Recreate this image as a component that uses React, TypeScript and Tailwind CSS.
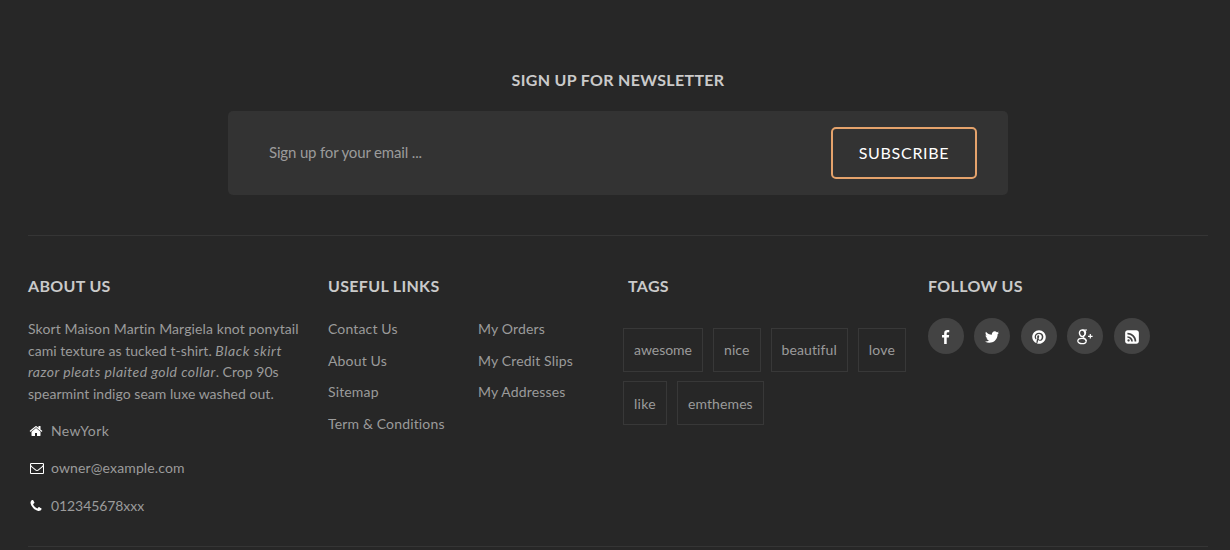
import type { ReactNode } from "react";
import { FaPinterest } from "react-icons/fa";

const paths = {
  home: "M1472 992v480q0 26-19 45t-45 19h-384v-384h-256v384h-384q-26 0-45-19t-19-45v-480q0-1 .5-3t.5-3l575-474 575 474q1 2 1 6zm223-69l-62 74q-8 9-21 11h-3q-13 0-21-7l-692-577-692 577q-12 8-24 7-13-2-21-11l-62-74q-8-10-7-23.5t11-21.5l719-599q32-26 76-26t76 26l244 204v-195q0-14 9-23t23-9h192q14 0 23 9t9 23v408l219 182q10 8 11 21.5t-7 23.5z",
  mail: "M1664 1504v-768q-32 36-69 66-268 206-426 338-51 43-83 67t-86.5 48.5-102.5 24.5h-2q-48 0-102.5-24.5t-86.5-48.5-83-67q-158-132-426-338-37-30-69-66v768q0 13 9.5 22.5t22.5 9.5h1472q13 0 22.5-9.5t9.5-22.5zm0-1051v-24.5l-.5-13-3-12.5-5.5-9-9-7.5-14-2.5h-1472q-13 0-22.5 9.5t-9.5 22.5q0 168 147 284 193 152 401 317 6 5 35 29.5t46 37.5 44.5 31.5 50.5 27.5 43 9h2q20 0 43-9t50.5-27.5 44.5-31.5 46-37.5 35-29.5q208-165 401-317 54-43 100.5-115.5t46.5-131.5zm128-37v1088q0 66-47 113t-113 47h-1472q-66 0-113-47t-47-113v-1088q0-66 47-113t113-47h1472q66 0 113 47t47 113z",
  phone: "M1600 1240q0 27-10 70.5t-21 68.5q-21 50-122 106-94 51-186 51-27 0-53-3.5t-57.5-12.5-47-14.5-55.5-20.5-49-18q-98-35-175-83-127-79-264-216t-216-264q-48-77-83-175-3-9-18-49t-20.5-55.5-14.5-47-12.5-57.5-3.5-53q0-92 51-186 56-101 106-122 25-11 68.5-21t70.5-10q14 0 21 3 18 6 53 76 11 19 30 54t35 63.5 31 53.5q3 4 17.5 25t21.5 35.5 7 28.5q0 20-28.5 50t-62 55-62 53-28.5 46q0 9 5 22.5t8.5 20.5 14 24 11.5 19q76 137 174 235t235 174q2 1 19 11.5t24 14 20.5 8.5 22.5 5q18 0 46-28.5t53-62 55-62 50-28.5q14 0 28.5 7t35.5 21.5 25 17.5q25 15 53.5 31t63.5 35 54 30q70 35 76 53 3 7 3 21z",
  facebook: "M1343 12v264h-157q-86 0-116 36t-30 108v189h293l-39 296h-254v759h-306v-759h-255v-296h255v-218q0-186 104-288.5t277-102.5q147 0 228 12z",
  twitter: "M1684 408q-67 98-162 167 1 14 1 42 0 130-38 259.5t-115.5 248.5-184.5 210.5-258 146-323 54.5q-271 0-496-145 35 4 78 4 225 0 401-138-105-2-188-64.5t-114-159.5q33 5 61 5 43 0 85-11-112-23-185.5-111.5t-73.5-205.5v-4q68 38 146 41-66-44-105-115t-39-154q0-88 44-163 121 149 294.5 238.5t371.5 99.5q-8-38-8-74 0-134 94.5-228.5t228.5-94.5q140 0 236 102 109-21 205-78-37 115-142 178 93-10 186-50z",
  rss: "M640 1280q0-53-37.5-90.5t-90.5-37.5-90.5 37.5-37.5 90.5 37.5 90.5 90.5 37.5 90.5-37.5 37.5-90.5zm351 94q-13-232-177-396t-396-177q-14-1-24 9t-10 23v128q0 13 8.5 22t21.5 10q154 11 264 121t121 264q1 13 10 21.5t22 8.5h128q13 0 23-10t9-24zm384 1q-5-154-56-297.5t-139.5-260-205-205-260-139.5-297.5-56q-14-1-23 9-10 10-10 23v128q0 13 9 22t22 10q204 7 378 111.5t278.5 278.5 111.5 378q1 13 10 22t22 9h128q13 0 23-10 11-9 9-23zm289-959v960q0 119-84.5 203.5t-203.5 84.5h-960q-119 0-203.5-84.5t-84.5-203.5v-960q0-119 84.5-203.5t203.5-84.5h960q119 0 203.5 84.5t84.5 203.5z",
};

function Glyph({ d, className }: { d: string; className: string }) {
  return (
    <svg viewBox="0 0 1792 1792" fill="currentColor" className={className} aria-hidden="true">
      <path d={d} />
    </svg>
  );
}

function GooglePlus() {
  return (
    <svg viewBox="0 0 16 16" fill="none" stroke="currentColor" className="mt-px size-4" aria-hidden="true">
      <ellipse cx="5.2" cy="4.3" rx="2.7" ry="3.2" strokeWidth="1.4" transform="rotate(-14 5.2 4.3)" />
      <path d="M5.500 1h4.500M7.500 1.500c1.100.9 1.300 2.300.7 3.500C7.400 6.600 5.900 7.200 6.200 8.200c.4 1.200 3 1.600 3 3.700" strokeWidth="1.200" />
      <ellipse cx="5" cy="12" rx="4.200" ry="2.700" strokeWidth="1.300" />
      <path d="M13.300 5v4.600M11 7.300h4.600" strokeWidth="1.200" />
    </svg>
  );
}

function Heading({ children }: { children: ReactNode }) {
  return (
    <h2 className="text-base leading-6 font-bold tracking-[0.32px] whitespace-nowrap text-[#cacaca]">{children}</h2>
  );
}

const contacts = [
  { d: paths.home, text: "NewYork", tracking: "tracking-[0.4px]", icon: "ml-px mr-px size-[14px] text-white" },
  { d: paths.mail, text: "owner@example.com", tracking: "tracking-[0.13px]", icon: "ml-0.5 size-[14px] text-white" },
  { d: paths.phone, text: "012345678xxx", tracking: "tracking-[-0.08px]", icon: "ml-px mr-px size-[14px] text-white" },
];
const links = [
  ["Contact Us", "About Us", "Sitemap", "Term & Conditions"],
  ["My Orders", "My Credit Slips", "My Addresses"],
];
const tags = [
  { text: "awesome", tracking: "tracking-[-0.02px]" },
  { text: "nice", tracking: "tracking-[0.1px]" },
  { text: "beautiful", tracking: "tracking-[0.1px]" },
  { text: "love", tracking: "tracking-[0.2px]" },
  { text: "like", tracking: "tracking-[0.3px]" },
  { text: "emthemes", tracking: "tracking-[0.1px]" },
];
const socials = [
  { name: "Facebook", icon: <Glyph d={paths.facebook} className="mt-0.5 mr-px size-[15px]" /> },
  { name: "Twitter", icon: <Glyph d={paths.twitter} className="mt-0.5 size-4" /> },
  { name: "Pinterest", icon: <FaPinterest className="mt-0.5 size-[14px]" /> },
  { name: "Google Plus", icon: <GooglePlus /> },
  { name: "RSS", icon: <Glyph d={paths.rss} className="mt-0.5 size-4" /> },
];

export default function App() {
  return (
    <footer className="h-[550px] overflow-hidden bg-[#272727] pr-[22px] pl-7 font-['Lato',sans-serif] text-sm text-[#9b9b9b] [font-variant-ligatures:none]">
      <section className="flex h-[236px] flex-col items-center border-b border-[#353535] pt-[68px]">
        <Heading>SIGN UP FOR NEWSLETTER</Heading>
        <form className="mt-[19px] flex h-[84px] w-[780px] items-center justify-between rounded-[5px] bg-[#333333] pr-[31px] pl-[41px]">
          <input
            type="email"
            aria-label="Email"
            placeholder="Sign up for your email ..."
            className="w-[400px] bg-transparent text-[15px] tracking-[-0.16px] outline-none placeholder:text-[#9b9b9b]"
          />
          <button
            type="button"
            className="h-[52px] w-[146px] rounded-[5px] border-2 border-[#e5a36c] text-base tracking-[0.7px] text-white"
          >
            SUBSCRIBE
          </button>
        </form>
      </section>
      <div className="grid h-[311px] grid-cols-[300px_300px_300px_280px] border-b border-[#353535] pt-[38px]">
        <section>
          <Heading>ABOUT US</Heading>
          <p className="mt-5 leading-[21.6px] tracking-[0.04px] whitespace-nowrap">
            <span className="tracking-[0.11px]">Skort Maison Martin Margiela knot ponytail</span>
            <br />
            cami texture as tucked t-shirt. <em className="tracking-[0.6px]">Black skirt</em>
            <br />
            <em className="tracking-[0.45px]">razor pleats plaited gold collar</em>. Crop 90s
            <br />
            spearmint indigo seam luxe washed out.
          </p>
          <ul className="mt-[7.6px]">
            {contacts.map(({ d, text, tracking, icon }) => (
              <li key={text} className="flex h-[37.5px] items-center gap-[7px]">
                <Glyph d={d} className={icon} />
                <span className={tracking}>{text}</span>
              </li>
            ))}
          </ul>
        </section>
        <section>
          <Heading>USEFUL LINKS</Heading>
          <div className="mt-[15.4px] grid grid-cols-2">
            {links.map((group) => (
              <ul key={group[0]}>
                {group.map((label) => (
                  <li key={label} className="flex h-[31.6px] items-center tracking-[0.15px] whitespace-nowrap">
                    <a href="#">{label}</a>
                  </li>
                ))}
              </ul>
            ))}
          </div>
        </section>
        <section>
          <Heading>TAGS</Heading>
          <ul className="mt-[30px] -ml-[5px] flex flex-wrap gap-x-[10px] gap-y-[9.9px]">
            {tags.map(({ text, tracking }) => (
              <li key={text} className="flex h-[43.5px] items-center border border-[#383838] px-[10px] pt-px">
                <a href="#" className={tracking}>
                  {text}
                </a>
              </li>
            ))}
          </ul>
        </section>
        <section>
          <Heading>FOLLOW US</Heading>
          <ul className="mt-5 flex gap-[10.4px]">
            {socials.map(({ name, icon }) => (
              <li key={name}>
                <a
                  href="#"
                  aria-label={name}
                  className="flex size-9 items-center justify-center rounded-full bg-[#434343] text-white"
                >
                  {icon}
                </a>
              </li>
            ))}
          </ul>
        </section>
      </div>
    </footer>
  );
}
